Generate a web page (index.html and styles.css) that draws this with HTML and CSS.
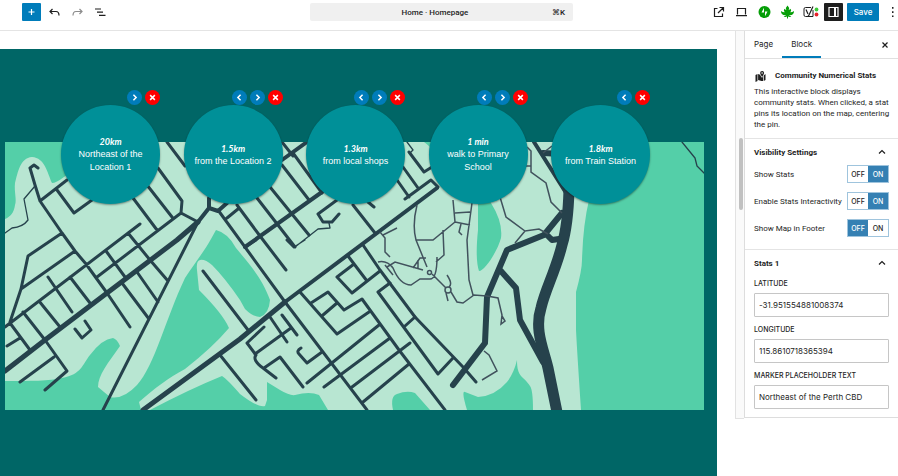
FILE: index.html
```html
<!DOCTYPE html>
<html lang="en">
<head>
<meta charset="utf-8">
<meta name="viewport" content="width=device-width, initial-scale=1">
<title>Home - Homepage</title>
<link rel="stylesheet" href="styles.css">
</head>
<body>
<header class="topbar">
  <div class="tools">
    <button class="tool add" aria-label="Add block"><svg viewBox="0 0 19 18"><path d="M9.500 6v6M6.500 9h6"/></svg></button>
    <button class="tool" aria-label="Undo"><svg viewBox="0 0 19 18"><path d="M7.500 6L5 8.500 7.500 11M5 8.500h6q3 0 3 4"/></svg></button>
    <button class="tool faded" aria-label="Redo"><svg viewBox="0 0 19 18"><path d="M11.500 6L14 8.500 11.500 11M14 8.500H8q-3 0-3 4"/></svg></button>
    <button class="tool" aria-label="Document overview"><svg viewBox="0 0 19 18"><path d="M4 6H10M6 9.200H12M8 12.400h6.500"/></svg></button>
  </div>
  <button class="command"><span class="doc">Home · Homepage</span><span>⌘K</span></button>
  <div class="actions">
    <a class="tool" href="#" aria-label="View page"><svg viewBox="0 0 19 18"><path d="M8.500 5.500H5.500v8h8v-3M10.500 4.500h4v4M14.500 4.500l-5.500 5.500"/></svg></a>
    <button class="tool" aria-label="Preview"><svg viewBox="0 0 19 18"><path d="M5.500 11.500v-6h8v6M4 12.700h11"/></svg></button>
    <button class="tool" aria-label="Jetpack"><svg viewBox="0 0 19 18"><circle class="green" cx="9.500" cy="9" r="6"/><path class="bolt" d="M9 4.800v4.700H6.500zM10 13.200V8.500h2.500z"/></svg></button>
    <button class="tool" aria-label="Leaf settings"><svg viewBox="0 0 19 18"><path class="green" d="M9.500 2.500q2.300 2 1.200 4.500 1.200-.2 1.900-1.200 1.300 1.700-.3 3.500 1.700.3 3.500-1.300.6 2.600-2.200 4l-3 .2q1.400.9 2.700.7-1 1.700-3.300.5v2h-1v-2q-2.300 1.200-3.300-.5 1.300.2 2.700-.7l-3-.2Q2.600 10.600 3.200 8q1.800 1.600 3.500 1.300-1.600-1.800-.3-3.500.7 1 1.900 1.200-1.100-2.500 1.200-4.500z"/></svg></button>
    <button class="tool" aria-label="Yoast SEO"><svg viewBox="0 0 19 18"><path class="fine" d="M10 4.500H4.500q-1.500 0-1.500 1.500v6q0 1.500 1.500 1.500H12V7"/><path d="M5 6.500l2 4.500M12 3.500L8 12q-.8 1.700-2 1.500"/><circle class="lime" cx="15.500" cy="6.500" r="1.900"/><circle class="red" cx="15.500" cy="11.500" r="1.900"/></svg></button>
    <button class="tool dark" aria-label="Settings"><svg viewBox="0 0 19 18"><path d="M5 4.500h9v9H5z"/><path class="pane" d="M11 4.500v9"/></svg></button>
    <button class="save">Save</button>
    <button class="more" aria-label="Options"><svg viewBox="0 0 8 18"><path d="M4 4h1.500v1.700H4zM4 8.200h1.500v1.700H4zM4 12.400h1.500v1.700H4z"/></svg></button>
  </div>
</header>
<div class="workspace">
  <main class="canvas">
    <section class="block">
      <div class="stats">
        <article class="stat">
          <div class="moves"><button aria-label="Move right"><svg viewBox="0 0 14 14"><path d="M6 4.500L8.500 7 6 9.500"/></svg></button><button class="remove" aria-label="Remove"><svg viewBox="0 0 14 14"><path d="M4.800 4.800l4.400 4.400M9.200 4.800L4.800 9.200"/></svg></button></div>
          <div class="bubble"><strong>20km</strong><span>Northeast of the Location 1</span></div>
        </article>
        <article class="stat">
          <div class="moves"><button aria-label="Move left"><svg viewBox="0 0 14 14"><path d="M8 4.500L5.500 7 8 9.500"/></svg></button><button aria-label="Move right"><svg viewBox="0 0 14 14"><path d="M6 4.500L8.500 7 6 9.500"/></svg></button><button class="remove" aria-label="Remove"><svg viewBox="0 0 14 14"><path d="M4.800 4.800l4.400 4.400M9.200 4.800L4.800 9.200"/></svg></button></div>
          <div class="bubble"><strong>1.5km</strong><span>from the Location 2</span></div>
        </article>
        <article class="stat">
          <div class="moves"><button aria-label="Move left"><svg viewBox="0 0 14 14"><path d="M8 4.500L5.500 7 8 9.500"/></svg></button><button aria-label="Move right"><svg viewBox="0 0 14 14"><path d="M6 4.500L8.500 7 6 9.500"/></svg></button><button class="remove" aria-label="Remove"><svg viewBox="0 0 14 14"><path d="M4.800 4.800l4.400 4.400M9.200 4.800L4.800 9.200"/></svg></button></div>
          <div class="bubble"><strong>1.3km</strong><span>from local shops</span></div>
        </article>
        <article class="stat">
          <div class="moves"><button aria-label="Move left"><svg viewBox="0 0 14 14"><path d="M8 4.500L5.500 7 8 9.500"/></svg></button><button aria-label="Move right"><svg viewBox="0 0 14 14"><path d="M6 4.500L8.500 7 6 9.500"/></svg></button><button class="remove" aria-label="Remove"><svg viewBox="0 0 14 14"><path d="M4.800 4.800l4.400 4.400M9.200 4.800L4.800 9.200"/></svg></button></div>
          <div class="bubble"><strong>1 min</strong><span>walk to Primary School</span></div>
        </article>
        <article class="stat">
          <div class="moves"><button aria-label="Move left"><svg viewBox="0 0 14 14"><path d="M8 4.500L5.500 7 8 9.500"/></svg></button><button class="remove" aria-label="Remove"><svg viewBox="0 0 14 14"><path d="M4.800 4.800l4.400 4.400M9.200 4.800L4.800 9.200"/></svg></button></div>
          <div class="bubble"><strong>1.8km</strong><span>from Train Station</span></div>
        </article>
      </div>
      <svg class="map" viewBox="5 142 699 268" role="img" aria-label="Street map">
        <path class="land" d="M5 142h699v268H5z"/>
        <g class="park">
          <path d="M5 142H75V170L64 177Q56 183 52 183C47 172 45 158 32 157C20 158 18 172 15 183C14 192 17 200 15 205C14 213 10 217 5 219Z"/>
          <path d="M5 381C30 381 50 381 62 378C82 374 82 365 90 355Q102 339 113 338Q117 339 120 346C108 363 98 375 98 387L110 397Q123 400 137 385C155 365 165 320 185 278C195 263 205 250 211 239L216 230Q228 233 236 248C250 265 262 278 270 300Q269 314 260 317Q253 317 245 309L240 300Q225 278 212 265Q205 259 200 260Q196 261 197 270L199 290Q223 314 229 328Q213 347 185 369C168 378 155 388 139 402L141 410H5Z"/>
          <path d="M150 410Q190 389 222 376Q227 379 240 394Q258 408 265 406L267 400V382L280 390Q290 396 295 395Q310 391 319 395L328 410Z"/>
          <path d="M393 410Q390 396 397 394Q407 390 415 393L430 410Z"/>
          <path d="M467 410Q461 390 465 392L478 397Q495 396 507 382Q514 373 517 360C517 378 523 375 530 386Q533 390 533 410Z"/>
          <path d="M478 190H485L491 203Q503 222 501 238C498 250 485 271 479 271Q475 259 478 230Z"/>
          <path d="M424 142H450V170Q434 149 424 142Z"/>
          <path d="M600 142H704V410H581Q577 350 576 330V292Q582 270 582 260Q583 225 589 200Z"/>
        </g>
        <g class="road">
          <path d="M30 168L35 185 40 201 67 180M30 168L34 165 38 168M57 190L74 213 92 200M40 201L62 233 75 251 86 264 107 293 130 327M62 233L28 256 21 289 10 322M75 251L21 289M140 224L5 327M97 277L181 213 182 201 158 168M167 142L185 166M128 233L150 260 168 281M133 198L157 230M147 185L172 217M181 213L198 222 103 410M48 277L72 312M70 277L90 303M39 301L60 327M23 312L45 340 67 371 45 390M10 323L30 350M7 346L20 338M54 357L20 382M75 329L82 338 91 330 85 321M106 251L125 277M122 283L149 319M137 272L158 302"/>
          <path d="M220 355L256 400M203 271L248 330M218 210L285 302 367 410M237 205L260 236 286 270M257 198L295 247M270 187L309 235M282 165L309 200M293 153L322 193M282 142L293 156M227 218L238 209M245 247L256 240M287 240L294 247M337 200L318 214 323 222H332L339 214M353 205L375 233M368 202L374 207M363 245L380 270 415 317 463 367 476 382M409 152L424 172 432 167M403 167L418 188M397 180L409 197M405 199L431 180 438 187"/>
          <path d="M348 256L367 281M354 264L337 277 352 293 380 271M300 292L337 334 369 312M311 303L328 292 344 310 362 299 399 350 445 410M337 303L323 315M379 325L307 383M390 338L324 387M410 343L352 387M409 364L363 402M390 283L378 292 438 374 453 358M415 317L405 326M270 317L287 342M282 315L297 335M291 328L255 354M264 327L247 343 256 355Q252 360 263 368L276 378M264 368L280 357 303 387M301 348Q296 351 299 354L307 363 322 352"/>
          <path class="mid" d="M198 222L209 208V198M209 208L218 211 227 203M245 247L322 192M282 160L307 142M285 302L437 188M534 142L568 196"/>
          <path class="main" d="M5 371L45 340 107 293 177 240 198 222M143 410L240 339 285 302"/>
          <path class="wide" d="M562 213L544 235 507 250 487 297 485 343 453 385M500 270L516 288 520 320 543 362M546 234L552 240 566 238M543 153L562 154"/>
          <path class="highway" d="M569 190Q568 225 562 245C556 270 545 290 541 308C534 330 544 350 548 368L557 412"/>
          <path class="lane" d="M35 186L24 199 28 220Q23 227 12 228L5 233M295 247L318 229 330 228 329 223M294 247L305 240M407 142L413 150 410 153M682 142L695 158 697 166 704 173"/>
        </g>
        <g class="path">
          <path d="M417 205Q412 225 416 240H433L455 222 453 200M455 213L470 212M455 222L470 225M461 224L459 232 462 235M416 240L427 267M383 235L397 228M380 232L385 238V252L390 257M378 262Q387 260 393 268Q400 285 411 285L420 279H430Q437 279 437 257M385 265L393 275M387 267L395 262 423 270M413 268L420 258H426M418 268V260M443 230L444 255 436 262M432 274L446 288M447 275Q453 284 449 287M446 293L448 301M451 292L457 302 463 303 474 295 487 296 498 298 502 315 501 324 505 321 502 316M472 203L467 240 469 280 473 295M527 147L531 151V172L546 183 551 202 562 213M500 197L506 217 525 231 539 229 548 234M525 231L515 243M543 153L552 146M484 351L489 355 497 371 482 380M525 166H531"/>
          <circle cx="429.500" cy="272.500" r="2"/><circle cx="448" cy="290" r="3"/>
        </g>
      </svg>
    </section>
  </main>
  <div class="scroller"><div class="thumb"></div></div>
  <aside class="sidebar">
    <div class="tabs"><button>Page</button><button class="current">Block</button><button class="close" aria-label="Close settings"><svg viewBox="0 0 8 8"><path d="M1.500 1.500l5 5M6.500 1.500l-5 5"/></svg></button></div>
    <section class="intro">
      <h1><svg viewBox="0 0 12 12"><path d="M1 5l2-1v7l-2 1zM3.600 4l2 .7q.8 2 1.900 3l1-1.200v4.600L7 11l-3.400-1zM9.200 5.500L11 4v6l-1.800 1zM7.600 1a2 2 0 012 2q0 1.200-2 4-2-2.800-2-4a2 2 0 012-2z"/><circle cx="7.600" cy="3" r=".8"/></svg>Community Numerical Stats</h1>
      <p>This interactive block displays community stats. When clicked, a stat pins its location on the map, centering the pin.</p>
    </section>
    <section class="panel">
      <h2><button>Visibility Settings<svg viewBox="0 0 8 8"><path d="M1 5.500l3-3 3 3"/></svg></button></h2>
      <div class="settings">
        <div class="setting" role="group" aria-labelledby="s1"><span id="s1">Show Stats</span><div class="switch"><button aria-pressed="false">OFF</button><button aria-pressed="true">ON</button></div></div>
        <div class="setting" role="group" aria-labelledby="s2"><span id="s2">Enable Stats Interactivity</span><div class="switch"><button aria-pressed="false">OFF</button><button aria-pressed="true">ON</button></div></div>
        <div class="setting" role="group" aria-labelledby="s3"><span id="s3">Show Map in Footer</span><div class="switch"><button aria-pressed="true">OFF</button><button aria-pressed="false">ON</button></div></div>
      </div>
    </section>
    <section class="panel">
      <h2><button>Stats 1<svg viewBox="0 0 8 8"><path d="M1 5.500l3-3 3 3"/></svg></button></h2>
      <div class="fields">
        <div class="field"><label for="lat">LATITUDE</label><input id="lat" type="text" value="-31.951554881008374"></div>
        <div class="field"><label for="lng">LONGITUDE</label><input id="lng" type="text" value="115.8610718365394"></div>
        <div class="field"><label for="marker">MARKER PLACEHOLDER TEXT</label><input id="marker" type="text" value="Northeast of the Perth CBD"></div>
      </div>
    </section>
  </aside>
</div>
</body>
</html>
```
FILE: styles.css
```css
* { box-sizing: border-box; }
body {
  margin: 0;
  min-height: 100vh;
  display: flex;
  flex-direction: column;
  overflow: hidden;
  background: #fff;
  color: #1e1e1e;
  font: 8px/11px Roboto, sans-serif;
}
button, input { font: inherit; color: inherit; }
button { margin: 0; padding: 0; border: 0; background: none; }
svg { display: block; fill: none; stroke: currentColor; }
h1, h2, p { margin: 0; font-size: 8px; }

.topbar {
  display: grid;
  grid-template-columns: 310px minmax(0, 263px) 1fr;
  padding: 3px 2px 9px 0;
  border-bottom: 1px solid #e4e4e4;
}
.tools { display: flex; gap: 4px; padding-left: 22px; }
.tool { width: 19px; height: 18px; color: #1e1e1e; }
.tool svg { width: 19px; height: 18px; stroke-width: 1.2; }
.add { border-radius: 1px; background: #007cba; color: #fff; }
.faded { color: #8c8c8c; }
.dark { border-radius: 1px; background: #1e1e1e; color: #fff; }
.pane { stroke-width: 2; }
.fine { stroke-width: 1; }
.green { fill: #069e08; stroke: none; }
.lime { fill: #3ecb3a; stroke: none; }
.red { fill: #e8222c; stroke: none; }
.bolt { fill: #fff; stroke: none; }
.command {
  display: flex;
  align-items: center;
  padding: 0 8px;
  border-radius: 2px;
  background: #f0f0f0;
  font-weight: 500;
}
.doc { flex: 1; text-align: center; }
.actions { display: flex; justify-content: flex-end; gap: 4px; }
.save { width: 32px; border-radius: 1px; background: #007cba; color: #fff; font-family: Inter, sans-serif; font-weight: 500; }
.more { margin-left: 5px; }
.more svg { width: 8px; height: 18px; fill: currentColor; stroke: none; }

.workspace { flex: 1; display: flex; align-items: flex-start; }
.canvas { flex: 1; min-width: 0; align-self: stretch; display: flex; padding: 18px 18px 0 0; }
.block { flex: 1; min-width: 0; padding: 41px 13px 65px 5px; background: #006666; }
.stats { position: relative; display: flex; justify-content: space-between; padding: 0 54px 0 56px; }
.stat { width: 99px; }
.moves { display: flex; justify-content: flex-end; gap: 3px; }
.moves button { border-radius: 50%; background: #007cba; color: #fff; }
.moves .remove { background: #f00; }
.moves svg { width: 15px; height: 15px; stroke-width: 1.4; }
.bubble {
  display: flex;
  flex-direction: column;
  align-items: center;
  justify-content: center;
  height: 99px;
  padding: 0 10px;
  border-radius: 50%;
  background: #009098;
  box-shadow: 0 1px 2px #0006;
  color: #fff;
  text-align: center;
  font: 9px/13px "Liberation Sans", sans-serif;
}
.bubble strong { font: italic 700 9px/13px Lato, sans-serif; }
.map { width: 100%; margin-top: -62px; }
.land { fill: #b8e6d2; stroke: none; }
.park { fill: #54cfa8; stroke: none; }
.road { stroke: #26424c; stroke-width: 3; stroke-linecap: round; stroke-linejoin: round; }
.mid { stroke-width: 4; }
.main { stroke-width: 5; }
.wide { stroke-width: 6; }
.highway { stroke-width: 11; }
.lane { stroke-width: 1.300; }
.path { stroke: #41525d; stroke-width: 1.500; }

.scroller { align-self: stretch; width: 9px; height: 388px; padding: 107px 1px 0 3px; border: solid #e2e2e2; border-width: 0 0 1px 1px; background: #fafafa; }
.thumb { height: 72px; border-radius: 3px; background: #c1c1c1; }

.sidebar { width: 154px; border: solid #ddd; border-width: 0 0 1px 1px; }
.tabs { display: flex; border-bottom: 1px solid #e0e0e0; }
.tabs button { height: 27px; padding: 0 9px; font-family: Inter, sans-serif; }
.tabs .current { border-bottom: 2px solid #007cba; padding-top: 2px; }
.tabs .close { margin-left: auto; }
.tabs svg, h2 svg { width: 8px; height: 8px; stroke-width: 1.2; }
.intro { padding: 10px 4px 8px 9px; }
h1 { display: flex; align-items: center; gap: 8px; margin-bottom: 4px; font-weight: 700; line-height: 13px; }
h1 svg { width: 13px; height: 12px; fill: currentColor; stroke: none; }
h1 circle { fill: #fff; }
.panel { border-top: 1px solid #e4e4e4; }
h2 button { display: flex; align-items: center; justify-content: space-between; width: 100%; height: 26px; padding: 0 12px 0 9px; font-weight: 700; }
.settings { display: grid; gap: 9px; padding: 0 9px 12px; }
.setting { display: flex; align-items: center; justify-content: space-between; white-space: nowrap; }
.switch { display: flex; border: 1px solid #9fc4dd; }
.switch button { width: 20px; height: 16px; font: 500 7px/11px Inter, sans-serif; }
.switch [aria-pressed="true"] { background: #3580b3; color: #fff; }
.fields { display: grid; gap: 8px; padding: 3px 9px 8px; font-family: Inter, sans-serif; }
.field { display: grid; gap: 4px; }
.field label { font-size: 7px; line-height: 10px; font-weight: 500; }
.field input { width: 100%; height: 24px; padding: 0 4px; border: 1px solid #c6c6c6; border-radius: 1px; background: #fff; outline: 0; }
```
